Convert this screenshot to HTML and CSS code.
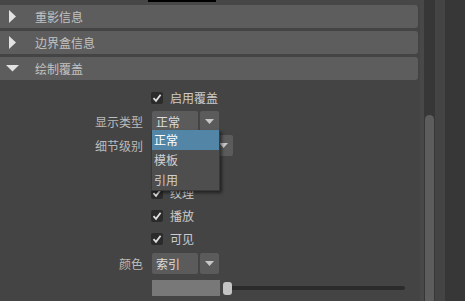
FILE: index.html
```html
<!DOCTYPE html>
<html lang="zh-CN">
<head>
<meta charset="UTF-8">
<title>属性编辑器</title>
<link rel="stylesheet" href="styles.css">
</head>
<body>

<div class="panel">
    <div class="top-strip"><div class="tab-mark"></div></div>

    <div class="section">
        <span class="arrow"><svg width="8" height="14" viewBox="0 0 8 14"><polygon points="0,0 7,6.5 0,13" fill="#e2e2e2"/></svg></span>
        <span class="title">重影信息</span>
    </div>
    <div class="section">
        <span class="arrow"><svg width="8" height="14" viewBox="0 0 8 14"><polygon points="0,0 7,6.5 0,13" fill="#e2e2e2"/></svg></span>
        <span class="title">边界盒信息</span>
    </div>
    <div class="section">
        <span class="arrow open"><svg width="14" height="7" viewBox="0 0 14 7"><polygon points="0,0 13,0 6.5,6.5" fill="#e2e2e2"/></svg></span>
        <span class="title">绘制覆盖</span>
    </div>

    <div class="form">
        <div class="row">
            <span class="label"></span>
            <label class="check"><span class="box"><svg width="12" height="12" viewBox="0 0 12 12"><path d="M2.5 6.2 L5 8.8 L9.6 2.8" fill="none" stroke="#e0e0e0" stroke-width="1.8"/></svg></span>启用覆盖</label>
        </div>
        <div class="row select-row">
            <span class="label">显示类型</span>
            <div class="select">
                <span class="select-value">正常</span>
                <span class="select-btn"><svg width="9" height="5" viewBox="0 0 9 5"><polygon points="0,0 9,0 4.5,5" fill="#c8c8c8"/></svg></span>
            </div>
        </div>
        <div class="row select-row">
            <span class="label">细节级别</span>
            <div class="select">
                <span class="select-value wide"></span>
                <span class="select-btn"><svg width="9" height="5" viewBox="0 0 9 5"><polygon points="0,0 9,0 4.5,5" fill="#c8c8c8"/></svg></span>
            </div>
        </div>
        <!-- row hidden under the open menu -->
        <div class="row select-row"></div>
        <div class="row">
            <span class="label"></span>
            <label class="check"><span class="box"><svg width="12" height="12" viewBox="0 0 12 12"><path d="M2.5 6.2 L5 8.8 L9.6 2.8" fill="none" stroke="#e0e0e0" stroke-width="1.8"/></svg></span>纹理</label>
        </div>
        <div class="row">
            <span class="label"></span>
            <label class="check"><span class="box"><svg width="12" height="12" viewBox="0 0 12 12"><path d="M2.5 6.2 L5 8.8 L9.6 2.8" fill="none" stroke="#e0e0e0" stroke-width="1.8"/></svg></span>播放</label>
        </div>
        <div class="row">
            <span class="label"></span>
            <label class="check"><span class="box"><svg width="12" height="12" viewBox="0 0 12 12"><path d="M2.5 6.2 L5 8.8 L9.6 2.8" fill="none" stroke="#e0e0e0" stroke-width="1.8"/></svg></span>可见</label>
        </div>
        <div class="row color-row">
            <span class="label">颜色</span>
            <div class="select">
                <span class="select-value">索引</span>
                <span class="select-btn"><svg width="9" height="5" viewBox="0 0 9 5"><polygon points="0,0 9,0 4.5,5" fill="#c8c8c8"/></svg></span>
            </div>
        </div>
        <div class="row select-row">
            <span class="label"></span>
            <div class="slider">
                <span class="swatch"></span>
                <div class="track"><span class="handle"></span></div>
            </div>
        </div>
    </div>

    <!-- menu opened from 显示类型 -->
    <ul class="popup">
        <li class="active">正常</li>
        <li>模板</li>
        <li>引用</li>
    </ul>
</div>

<div class="gutter"></div>
<div class="scroll-track"><div class="scroll-thumb"></div></div>
<div class="spacer"></div>
<div class="side"></div>

</body>
</html>
```

FILE: styles.css
```css
body {
    margin: 0;
    width: 465px;
    height: 301px;
    overflow: hidden;
    display: flex;
    background-color: #444444;
    font-family: "Noto Sans CJK SC", "Noto Sans", sans-serif;
    font-size: 12px;
    color: #bbbbbb;
}

.panel {
    flex: 0 0 420px;
    position: relative;
}

.top-strip {
    height: 5px;
    background-color: #474747;
}

.tab-mark {
    margin-left: 148px;
    width: 68px;
    height: 2px;
    background-color: #000;
}

.section {
    display: flex;
    align-items: center;
    height: 23px;
    margin: 0 2px 3px 0;
    background-color: #5d5d5d;
    border-radius: 0 3px 3px 0;
}

.section:last-of-type {
    margin-bottom: 0;
}

.arrow {
    width: 35px;
    display: flex;
    padding-left: 9px;
    box-sizing: border-box;
}

.arrow.open {
    padding-left: 6px;
}

.arrow svg {
    display: block;
}

.title {
    color: #c2c2c2;
    line-height: 23px;
}

.form {
    padding-top: 3px;
}

.row {
    display: grid;
    grid-template-columns: 143px 1fr;
    column-gap: 8px;
    align-items: center;
    height: 23px;
}

.select-row {
    height: 24px;
}

.color-row {
    height: 26px;
}

.label {
    text-align: right;
    color: #bbbbbb;
}

.check {
    display: flex;
    align-items: center;
    gap: 7px;
    color: #cccccc;
}

.box {
    width: 12px;
    height: 12px;
    background-color: #2b2b2b;
    border-radius: 2px;
}

.box svg {
    display: block;
}

.select {
    display: flex;
    gap: 2px;
    margin-left: 1px;
    height: 21px;
}

.select-value {
    width: 46px;
    padding-left: 4px;
    box-sizing: border-box;
    background-color: #5b5b5b;
    border-radius: 2px;
    color: #dddddd;
    line-height: 21px;
}

.select-value.wide {
    width: 60px;
}

.select-btn {
    width: 19px;
    background-color: #5b5b5b;
    border-radius: 2px;
    display: flex;
    align-items: center;
    justify-content: center;
}

.slider {
    display: flex;
    align-items: center;
    margin-left: 1px;
}

.swatch {
    width: 68px;
    height: 16px;
    background-color: #787878;
}

.track {
    position: relative;
    margin-left: 3px;
    width: 182px;
    height: 4px;
    background-color: #2b2b2b;
    border-radius: 2px;
}

.handle {
    position: absolute;
    left: 0;
    top: -4px;
    width: 9px;
    height: 13px;
    background-color: #c4c4c4;
    border-radius: 3px;
}

.popup {
    position: absolute;
    left: 151px;
    top: 130px;
    width: 67px;
    margin: 0;
    padding: 0;
    list-style: none;
    background-color: #4e4e4e;
    border: 1px solid #393939;
    border-top: none;
    box-shadow: 2px 2px 3px rgba(0, 0, 0, 0.5);
}

.popup li {
    height: 20px;
    line-height: 20px;
    padding-left: 2px;
    color: #d0d0d0;
}

.popup li.active {
    background-color: #5285a6;
    color: #ffffff;
}

.gutter {
    width: 4px;
    background-color: #484848;
}

.scroll-track {
    width: 11px;
    box-sizing: border-box;
    padding: 115px 1px 0 1px;
    display: flex;
    flex-direction: column;
    background-color: #373737;
}

.scroll-thumb {
    flex: 1;
    background-color: #5d5d5d;
    border-radius: 5px 5px 0 0;
}

.spacer {
    width: 10px;
    background-color: #444444;
}

.side {
    flex: 1;
    background-color: #373737;
}
```
